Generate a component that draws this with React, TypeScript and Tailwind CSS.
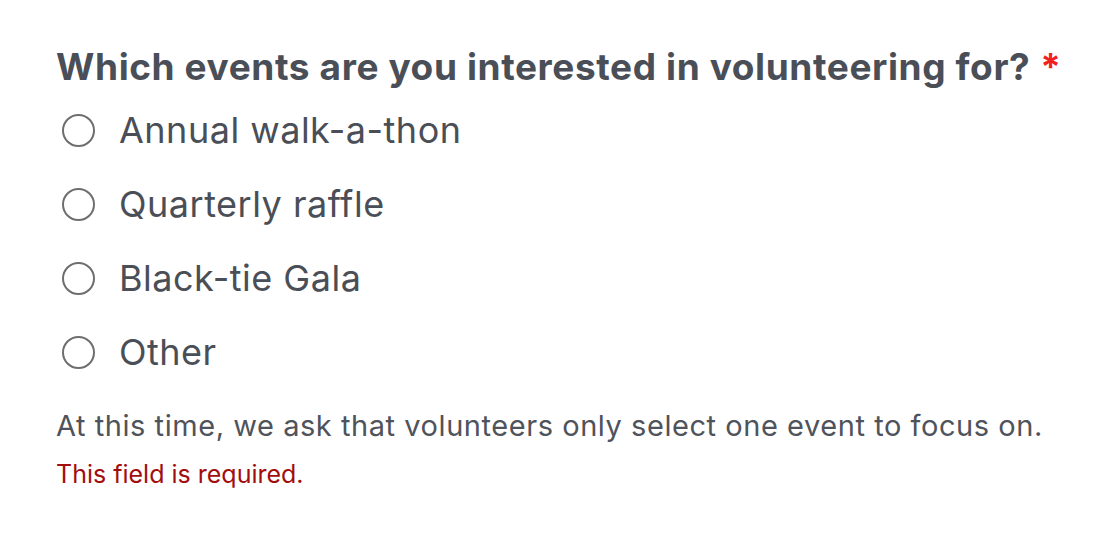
import { useState } from "react";

const options = ["Annual walk-a-thon", "Quarterly raffle", "Black-tie Gala", "Other"];

export default function App() {
  const [picked, setPicked] = useState<string | null>(null);

  return (
    <div className="min-h-screen bg-white pl-[56px] pt-[43px] font-['Inter',sans-serif]">
      <fieldset>
        <legend className="text-[37px] font-bold leading-[48px] tracking-[0.6px] text-[#4a4e57]">
          Which events are you interested in volunteering for?
          <span className="ml-[10px] text-[#f0211e]">*</span>
        </legend>
        <div className="mt-[2px] flex flex-col">
          {options.map((opt) => (
            <label key={opt} className="flex h-[74px] cursor-pointer items-center gap-[24px]">
              <input
                type="radio"
                name="events"
                checked={picked === opt}
                onChange={() => setPicked(opt)}
                className="sr-only"
              />
              <span className="ml-[6px] flex h-[33px] w-[33px] items-center justify-center rounded-full border-2 border-[#6e6e70] bg-white">
                {picked === opt && <span className="h-[17px] w-[17px] rounded-full bg-[#4a4e57]" />}
              </span>
              <span className="text-[36px] leading-[44px] tracking-[0.5px] text-[#4a4e57]">{opt}</span>
            </label>
          ))}
        </div>
      </fieldset>
      <p className="mt-[17px] text-[29px] leading-[40px] tracking-[0.55px] text-[#4f535b]">
        At this time, we ask that volunteers only select one event to focus on.
      </p>
      <p className="mt-[11px] text-[25px] leading-[34px] text-[#a20d0d]">This field is required.</p>
    </div>
  );
}
